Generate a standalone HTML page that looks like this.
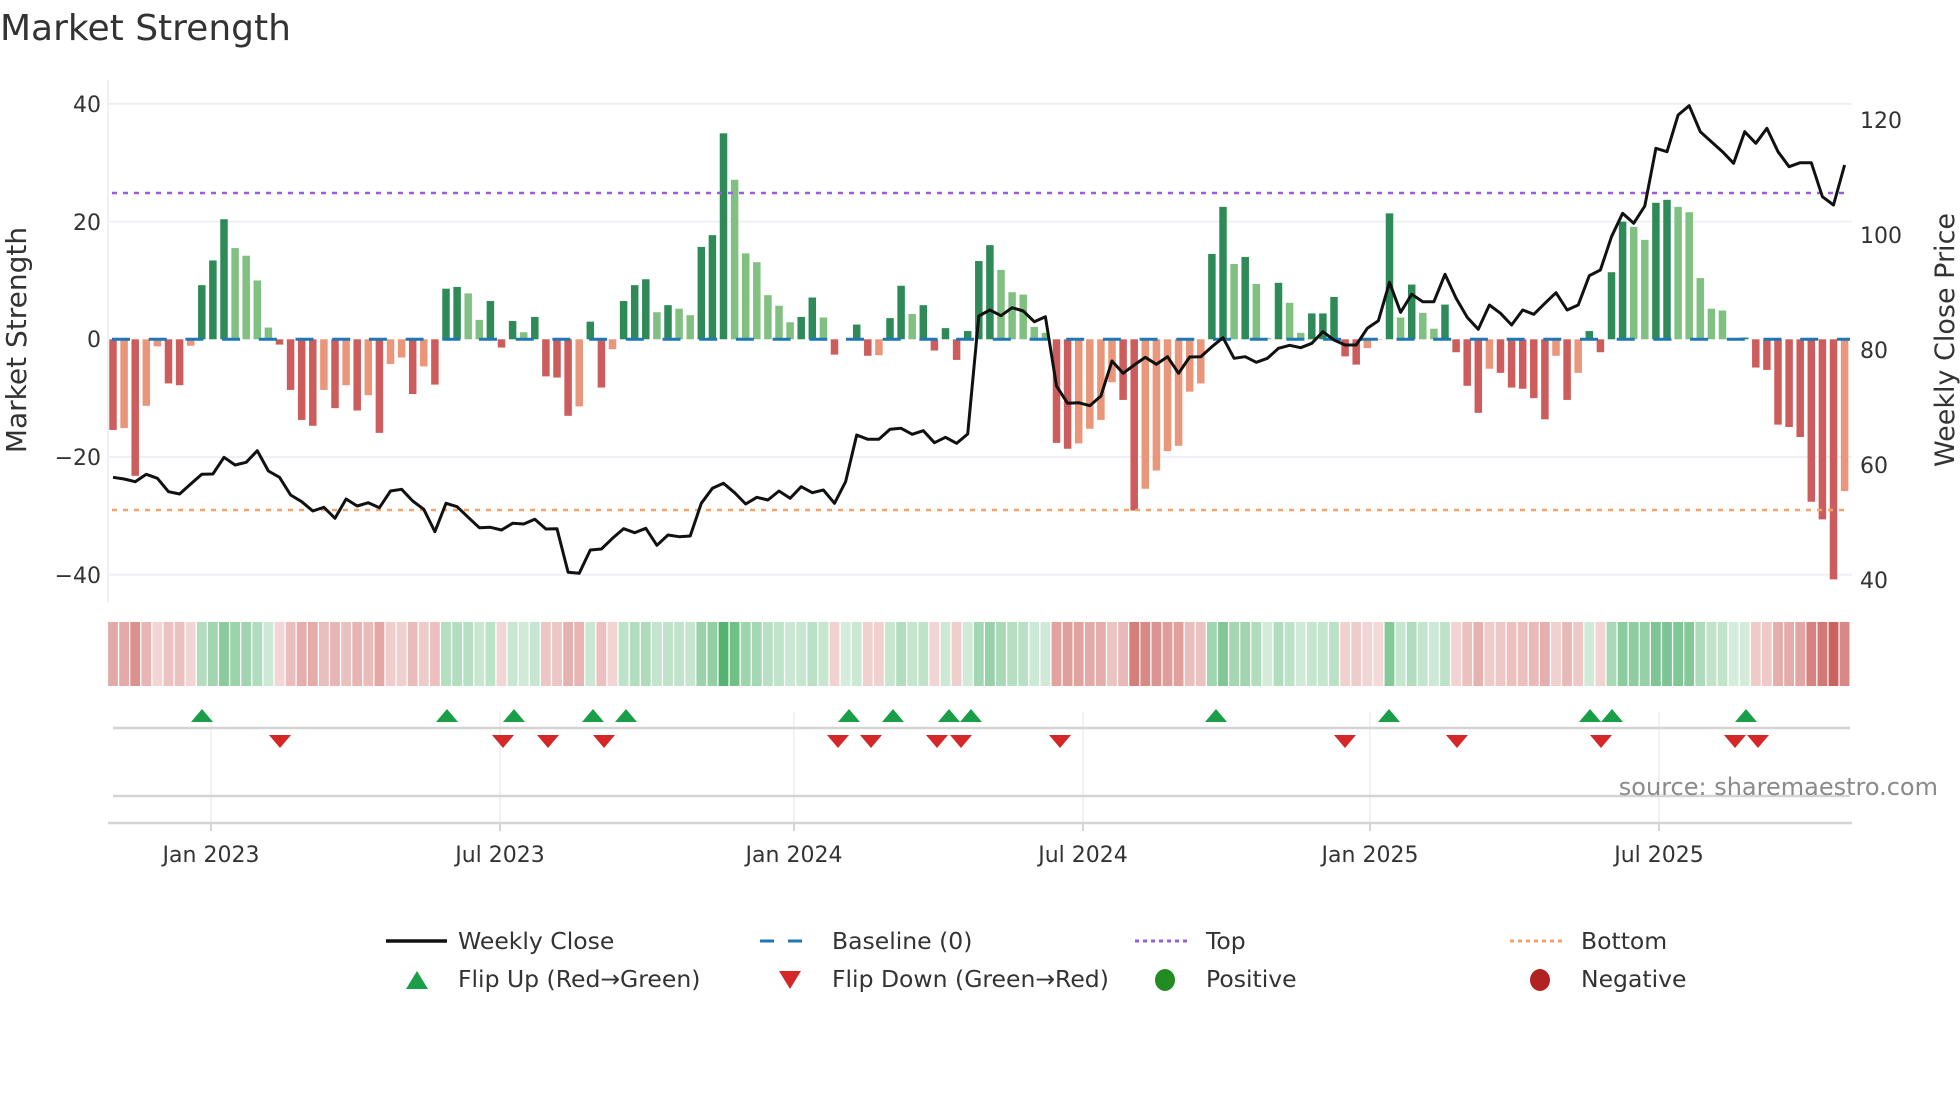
<!DOCTYPE html>
<html><head><meta charset="utf-8">
<style>
html,body{margin:0;padding:0;background:#fff;width:1960px;height:1102px;overflow:hidden}
svg{display:block}
text{font-family:"DejaVu Sans","Liberation Sans",sans-serif;fill:#333}
</style></head>
<body>
<svg id="s" width="1960" height="1102" viewBox="0 0 1960 1102" xmlns="http://www.w3.org/2000/svg">
<rect width="1960" height="1102" fill="#fff"/>
<text x="0" y="40" font-size="36">Market Strength</text>
<g stroke="#eef0f5" stroke-width="2">
<line x1="108" x2="1852" y1="103.9" y2="103.9"/>
<line x1="108" x2="1852" y1="221.6" y2="221.6"/>
<line x1="108" x2="1852" y1="457" y2="457"/>
<line x1="108" x2="1852" y1="574.7" y2="574.7"/>
</g>
<line x1="108" x2="108" y1="80" y2="602" stroke="#eef0f5" stroke-width="2"/>
<g font-size="22" text-anchor="end">
<text x="101" y="112">40</text>
<text x="101" y="230">20</text>
<text x="101" y="347">0</text>
<text x="101" y="465">−20</text>
<text x="101" y="583">−40</text>
</g>
<g font-size="22">
<text x="1860" y="128">120</text>
<text x="1860" y="243">100</text>
<text x="1860" y="358">80</text>
<text x="1860" y="473">60</text>
<text x="1860" y="588">40</text>
</g>
<text transform="translate(26,340) rotate(-90)" font-size="28" text-anchor="middle">Market Strength</text>
<text transform="translate(1954,340) rotate(-90)" font-size="27" text-anchor="middle">Weekly Close Price</text>
<g id="bars"></g>
<line x1="112" x2="1850" y1="339.3" y2="339.3" stroke="#1f77b4" stroke-width="3" stroke-dasharray="18 18.7"/>
<line x1="112" x2="1850" y1="193" y2="193" stroke="#9b5ce0" stroke-width="2.5" stroke-dasharray="5 6"/>
<line x1="112" x2="1850" y1="510" y2="510" stroke="#f0a46a" stroke-width="2.5" stroke-dasharray="5 6"/>
<polyline id="price" fill="none" stroke="#111" stroke-width="3" stroke-linejoin="round"/>
<g id="cells"></g>
<g stroke="#f1f2f5" stroke-width="2">
<line x1="211" x2="211" y1="712" y2="823"/><line x1="500" x2="500" y1="712" y2="823"/>
<line x1="794" x2="794" y1="712" y2="823"/><line x1="1083" x2="1083" y1="712" y2="823"/>
<line x1="1370" x2="1370" y1="712" y2="823"/><line x1="1659" x2="1659" y1="712" y2="823"/>
</g>
<line x1="113" x2="1850" y1="728" y2="728" stroke="#d4d4d4" stroke-width="2.5"/>
<line x1="113" x2="1850" y1="796" y2="796" stroke="#d4d4d4" stroke-width="2.5"/>
<line x1="108" x2="1852" y1="823" y2="823" stroke="#d4d4d4" stroke-width="2.5"/>
<g stroke="#d4d4d4" stroke-width="2">
<line x1="211" x2="211" y1="823" y2="831"/><line x1="500" x2="500" y1="823" y2="831"/>
<line x1="794" x2="794" y1="823" y2="831"/><line x1="1083" x2="1083" y1="823" y2="831"/>
<line x1="1370" x2="1370" y1="823" y2="831"/><line x1="1659" x2="1659" y1="823" y2="831"/>
</g>
<g id="marks"></g>
<g font-size="22" text-anchor="middle">
<text x="211" y="862">Jan 2023</text><text x="500" y="862">Jul 2023</text>
<text x="794" y="862">Jan 2024</text><text x="1083" y="862">Jul 2024</text>
<text x="1370" y="862">Jan 2025</text><text x="1659" y="862">Jul 2025</text>
</g>
<text x="1938" y="795" font-size="24" text-anchor="end" style="fill:#8a8a8a">source: sharemaestro.com</text>
<g font-size="23.5">
<line x1="386" x2="447" y1="941" y2="941" stroke="#111" stroke-width="3.5"/>
<text x="458" y="949">Weekly Close</text>
<line x1="760" x2="815" y1="941" y2="941" stroke="#1f77b4" stroke-width="3" stroke-dasharray="14 14"/>
<text x="832" y="949">Baseline (0)</text>
<line x1="1135" x2="1190" y1="941" y2="941" stroke="#9b5ce0" stroke-width="3" stroke-dasharray="4 4"/>
<text x="1206" y="949">Top</text>
<line x1="1510" x2="1565" y1="941" y2="941" stroke="#f0a46a" stroke-width="3" stroke-dasharray="4 4"/>
<text x="1581" y="949">Bottom</text>
<polygon points="406,989 428,989 417,971" fill="#1a9e48"/>
<text x="458" y="987">Flip Up (Red→Green)</text>
<polygon points="779,971 801,971 790,989" fill="#d62728"/>
<text x="832" y="987">Flip Down (Green→Red)</text>
<ellipse cx="1165" cy="980" rx="10" ry="11" fill="#228b22"/>
<text x="1206" y="987">Positive</text>
<ellipse cx="1540" cy="980" rx="10" ry="11" fill="#b22222"/>
<text x="1581" y="987">Negative</text>
</g>
</svg>
<script>
(function(){
var NS="http://www.w3.org/2000/svg";
var d="-15.4R -15.1r -23.2R -11.3r -1.2r -7.5R -7.8R -1.1r 9.2G 13.4G 20.4G 15.5g 14.2g 10g 2g -0.9R -8.6R -13.7R -14.7R -8.6r -11.7R -7.8r -12.1R -9.5r -15.9R -4.2r -3.1r -9.3R -4.6r -7.7R 8.6G 8.9G 7.8g 3.3g 6.5G -1.4R 3.1G 1.2g 3.8G -6.3R -6.5R -13R -11.4r 3G -8.2R -1.7r 6.5G 9.2G 10.2G 4.6g 5.8G 5.2g 4.1g 15.7G 17.7G 35G 27.1g 14.6g 13.1g 7.5g 5.7g 2.9g 3.8G 7.1G 3.7g -2.6R 0G 2.5G -2.8R -2.7r 3.6G 9.1G 4.3g 5.8G -1.9R 1.9G -3.5R 1.4G 13.3G 16G 11.8g 8g 7.6g 2.1g 1.1g -17.6R -18.6R -17.7r -15.2r -13.7r -7.3r -10.3R -29.1R -25.4r -22.3r -19r -18.1r -8.9r -7.5r 14.5G 22.5G 12.8g 14G 9.4g 0.2g 9.6G 6.2g 1.1g 4.4G 4.4G 7.2G -2.9R -4.3R -1.5r -0.1r 21.4G 3.7g 9.3G 4.5g 1.8g 5.9G -2.2R -7.9R -12.5R -5r -5.7R -8.2R -8.4R -10R -13.6R -2.8r -10.3R -5.7r 1.4G -2.2R 11.4G 20G 19.1g 16.9g 23.2G 23.7G 22.5g 21.6g 10.4g 5.2g 4.9g 0.1g 0.3G -4.8R -5.2R -14.5R -14.9R -16.6R -27.6R -30.6R -40.8R -25.8r".split(" ");
var col={G:"#2e8b57",g:"#80c080",R:"#cd5c5c",r:"#e9967a"};
var bars=document.getElementById("bars"),cells=document.getElementById("cells");
var z0=339.3,u=5.885;
for(var i=0;i<d.length;i++){
 var t=d[i].slice(-1),v=parseFloat(d[i]);var cx=113+i*11.1;
 if(Math.abs(v)>0.05){var r=document.createElementNS(NS,"rect");
 var y=v>0?z0-v*u:z0;r.setAttribute("x",cx-3.75);r.setAttribute("width",7.5);
 r.setAttribute("y",y);r.setAttribute("height",Math.abs(v)*u);r.setAttribute("fill",col[t]);bars.appendChild(r);}
 var c=document.createElementNS(NS,"rect");var a=Math.min(0.85,0.2+0.6*Math.abs(v)/35);
 c.setAttribute("x",cx-4.9);c.setAttribute("width",9.8);c.setAttribute("y",622);c.setAttribute("height",64);
 c.setAttribute("fill",v>=0?"rgba(40,160,75,"+a+")":"rgba(195,70,65,"+a+")");cells.appendChild(c);
}
var p1=[1072,1077,1085,1063,1075,1115,1122,1092,1063,1062,1012,1035,1027,992,1053,1072,1125,1145,1173,1162,1195,1137,1158,1148,1163,1113,1108,1143,1168,1235,1150,1160,1192,1223,1222,1230,1210,1212,1198,1227,1226,
1357,1360,1290,1287,1255,1226,1238,1225,1276,1245,1250,1248,1150,1105,1090,1118,1152,1132,1140,1113,1135,1100,1118,1110,1150,1085,945,958,958,928,925,943,932,968,952,970,942,588,
570,587,563,573,605,590,798,850,848,857,828,723,760,735,712,733,710,760,711,710,680,653,715,710,727,715,685,676,683,670,635,660,675,675,625,602,487,577,523,545,545];
var p2=[583,655,712,748,675,700,735,690,703,670,638,690,675,587,570,470,400,430,378,205,215,105,77,155,185,215,250,155,190,145,215,260,248,248,350,375,255];
var pts=[];
for(var k=0;k<p1.length;k++)pts.push((113+k*11.1).toFixed(1)+","+(120+p1[k]/3).toFixed(1));
for(var k=0;k<p2.length;k++)pts.push((113+(p1.length+k)*11.1).toFixed(1)+","+(80+p2[k]/3).toFixed(1));
document.getElementById("price").setAttribute("points",pts.join(" "));
var mk=document.getElementById("marks");
[202,447,514,593,626,849,893,949,971,1216,1389,1590,1612,1746].forEach(function(x){
 var p=document.createElementNS(NS,"polygon");p.setAttribute("points",(x-11)+",722 "+(x+11)+",722 "+x+",709");p.setAttribute("fill","#1a9e48");mk.appendChild(p);});
[280,503,548,604,838,871,937,961,1060,1345,1457,1601,1735,1758].forEach(function(x){
 var p=document.createElementNS(NS,"polygon");p.setAttribute("points",(x-11)+",735 "+(x+11)+",735 "+x+",748");p.setAttribute("fill","#d62728");mk.appendChild(p);});
})();
</script>
</body></html>
